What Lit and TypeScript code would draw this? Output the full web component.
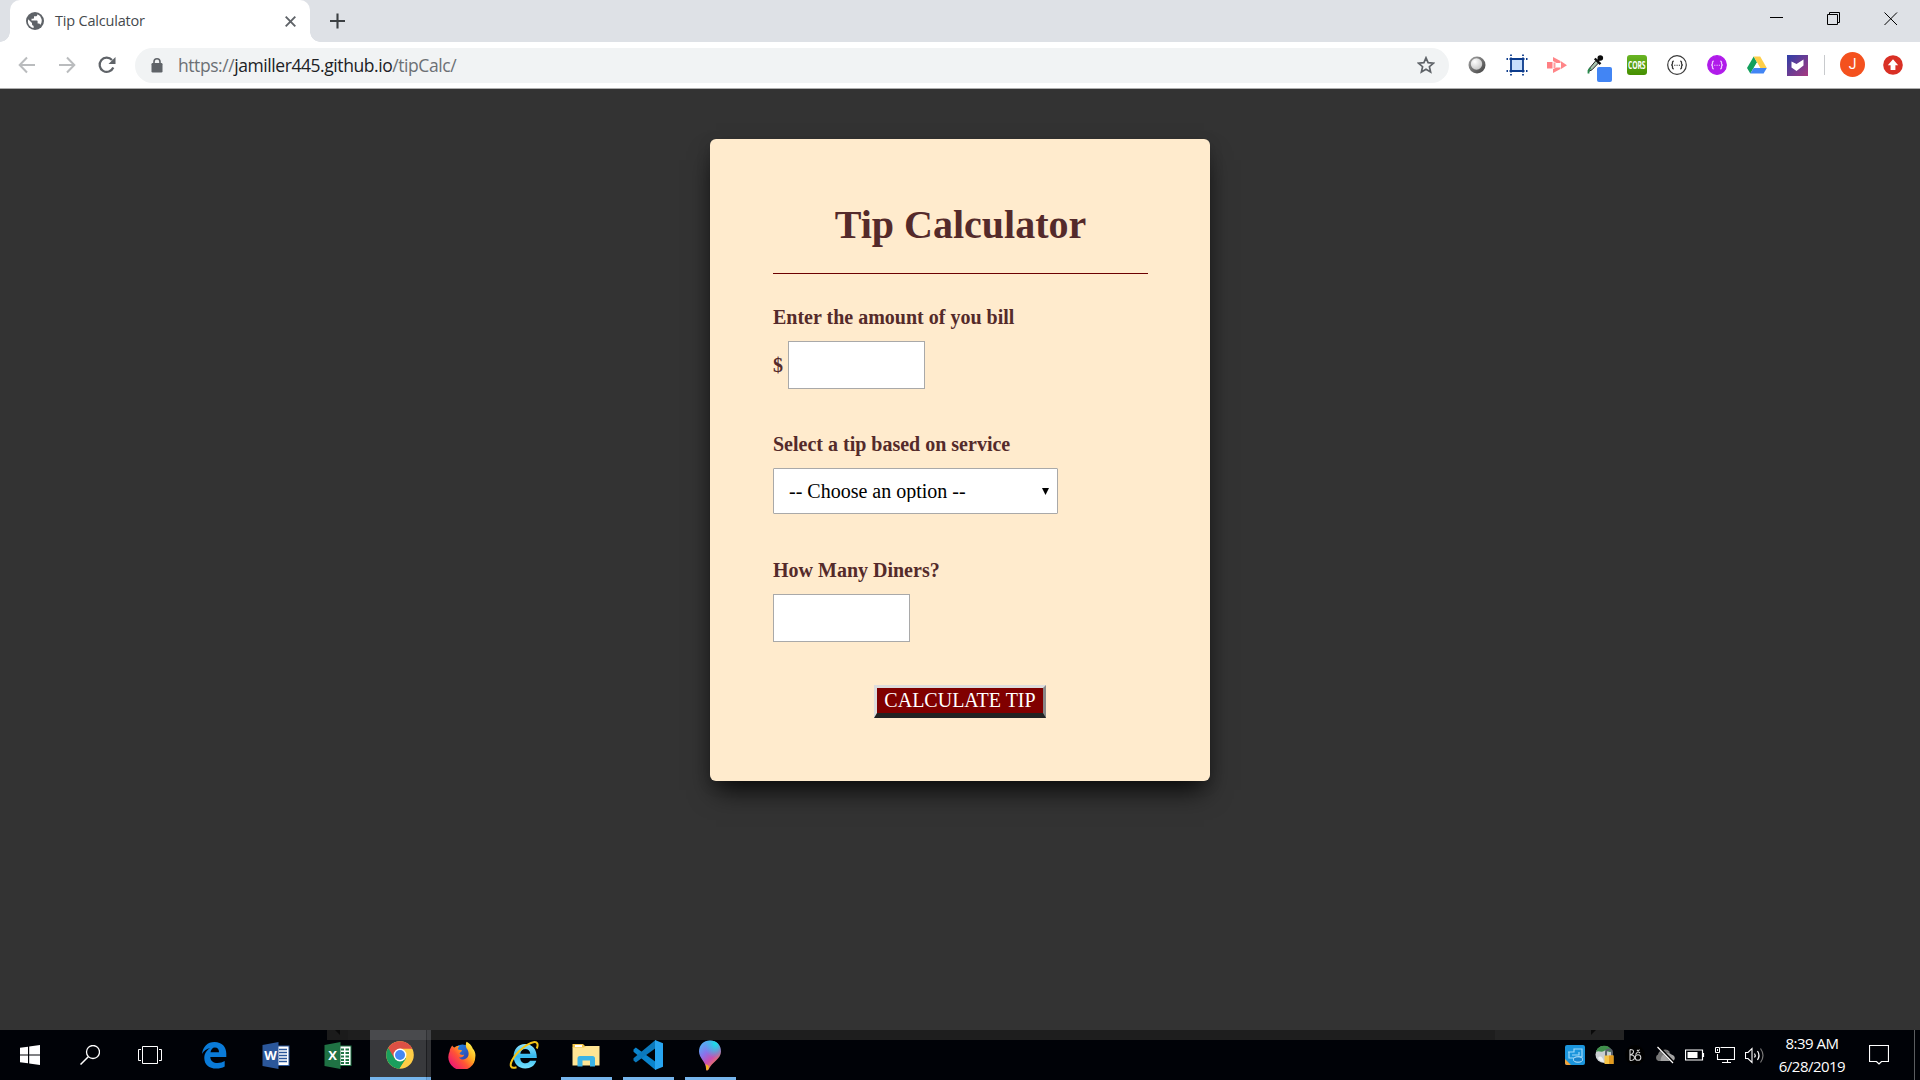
import { LitElement, html, css, svg } from "lit";
import { customElement } from "lit/decorators.js";

const icon = (w: number, h: number, body: unknown) =>
  html`<svg width=${w} height=${h} viewBox="0 0 ${w} ${h}" fill="none">${body}</svg>`;

const globe = icon(18, 18, svg`
  <circle cx="9" cy="9" r="9" fill="#5f6368"/>
  <path d="M2.2 7.2 L6 11 V12.2 C6 13 6.8 13.8 7.6 13.8 V16 C4.4 15.400 1.900 12.600 1.900 9.200 Z" fill="#fff"/>
  <path d="M11.500 2.200 C11.500 3.400 10.700 4.200 9.600 4.300 H8 V6 C8 6.500 7.600 6.800 7.200 6.800 H5.500 V8.600 H10.600 C11.200 8.600 11.600 9 11.600 9.600 V11.600 H12.500 C13.300 11.600 13.900 12.100 14.200 12.900 A6.900 6.900 0 0 0 11.500 2.200Z" fill="#fff"/>`);

const back = icon(18, 18, svg`<path d="M17 9H2M9 1.500L1.700 9L9 16.500" stroke="#babcbe" stroke-width="2"/>`);
const forward = icon(18, 18, svg`<path d="M1 9H16M9 1.500L16.300 9L9 16.500" stroke="#babcbe" stroke-width="2"/>`);
const reload = icon(18, 18, svg`
  <path d="M15.300 11.500A7.100 7.100 0 1 1 14 4" stroke="#5f6368" stroke-width="2.200"/>
  <path d="M17.500 1V8H10.500Z" fill="#5f6368"/>`);
const lock = icon(12, 15, svg`
  <rect x="0.500" y="5" width="11" height="9.500" rx="1.200" fill="#5f6368"/>
  <path d="M3 6V3.800a3 3 0 0 1 6 0V6" stroke="#5f6368" stroke-width="1.600"/>`);
const star = icon(18, 18, svg`
  <path d="M9 1.800L11.100 6.700L16.400 7.200L12.400 10.700L13.600 15.900L9 13.200L4.400 15.900L5.600 10.700L1.600 7.200L6.900 6.700Z" stroke="#5f6368" stroke-width="1.700"/>`);

const ball = icon(18, 18, svg`
  <defs><linearGradient id="bl" x1="0" y1="0" x2="1" y2="1"><stop stop-color="#a5a5a5"/><stop offset="1" stop-color="#3f3f3f"/></linearGradient>
  <radialGradient id="bi" cx=".35" cy=".3" r=".8"><stop stop-color="#fff"/><stop offset="1" stop-color="#c4c4c4"/></radialGradient></defs>
  <circle cx="9" cy="9" r="8.500" fill="url(#bl)"/><circle cx="8.500" cy="8" r="5.700" fill="url(#bi)"/>`);
const frame = icon(22, 22, svg`
  <rect x="5" y="5" width="12" height="12" fill="#c8dffc"/>
  <path d="M3.500 5H18.500M3.500 17H18.500M5 3.500V18.500M17 3.500V18.500" stroke="#0c3b8c" stroke-width="1.800"/>
  <path d="M0.500 5H2M20 5H21.500M0.500 17H2M20 17H21.500M5 0.500V2M17 0.500V2M5 20V21.500M17 20V21.500" stroke="#0c3b8c" stroke-width="1.800"/>`);
const play = icon(20, 18, svg`
  <rect x="0" y="6" width="5.500" height="6.500" fill="#ff7f83"/>
  <path d="M6 1L13.500 5V7H9.500L6 5Z" fill="#ff8588"/>
  <path d="M6 17L13.500 13V11.500H9.500L6 13Z" fill="#ff8588"/>
  <path d="M6.500 6.500H8.500V12H6.500Z" fill="#ff9c9e"/>
  <path d="M14 5.200L20 9.200L14 13Z" fill="#ff8588"/>`);
const dropper = icon(26, 28, svg`
  <path d="M2.500 17.500L3.300 14.500L10 6.500L12.500 9L6 15.800Z" fill="#a9c4af" stroke="#222" stroke-width="1"/>
  <path d="M2.500 19.500V16.500L4.500 14" stroke="#278b4c" stroke-width="1.800"/>
  <path d="M8.800 4.500L14.500 10.200M11 7.500L14.500 4" stroke="#111" stroke-width="2.400"/>
  <circle cx="14.300" cy="4" r="2.800" fill="#0b0b0b"/>
  <rect x="11" y="13" width="15" height="15" rx="2" fill="#4285f4"/>`);
const cors = html`<span class="cors"><span>CORS</span></span>`;
const braces = (ring: string, fill: string, ink: string) => icon(20, 20, svg`
  <circle cx="10" cy="10" r="9.300" fill=${fill} stroke=${ring} stroke-width="1.200"/>
  <path d="M6.800 6.200C5.300 6.200 5.500 7.200 5.500 8.200C5.500 9.300 5.200 10 4.200 10C5.200 10 5.500 10.700 5.500 11.800C5.500 12.800 5.300 13.800 6.800 13.800M13.200 6.200C14.700 6.200 14.500 7.200 14.500 8.200C14.500 9.300 14.800 10 15.800 10C14.800 10 14.500 10.700 14.500 11.800C14.500 12.800 14.700 13.800 13.200 13.800" stroke=${ink} stroke-width="1.300"/>
  <path d="M7.200 10.300H13" stroke=${ink} stroke-width="1.100" stroke-dasharray="1.200 1.100"/>`);
const drive = icon(20, 18, svg`
  <path d="M6.700 0.500L0 12L3.300 17.500L10 6.200Z" fill="#12a05c"/>
  <path d="M6.700 0.500H13.200L19.800 12H13.300Z" fill="#ffcf48"/>
  <path d="M6.700 12H19.800L16.600 17.500H3.300Z" fill="#4285f4"/>
  <path d="M10 6.800L13 12H6.900Z" fill="#fff"/>`);
const check = icon(21, 21, svg`
  <defs><linearGradient id="ck" x1="0" y1="0" x2="1" y2="1"><stop stop-color="#2d3fa8"/><stop offset="1" stop-color="#a8397f"/></linearGradient></defs>
  <rect width="21" height="21" fill="url(#ck)"/>
  <path d="M4.500 6.500L9.500 9L16.500 4.500V10.500L9.500 16L4.500 12.500Z" fill="#fff"/>`);
const update = icon(20, 20, svg`
  <circle cx="10" cy="10" r="9.800" fill="#d93025"/>
  <path d="M10 4.300L15.200 10.200H12.400V15H7.600V10.200H4.800Z" fill="#fff"/>`);

const windows = icon(20, 20, svg`<path d="M0 2.800L8 1.700V9.400H0ZM9.200 1.500L20 0V9.400H9.200ZM0 10.500H8V18.300L0 17.200ZM9.200 10.500H20V20L9.200 18.500Z" fill="#fff"/>`);
const search = icon(20, 20, svg`<circle cx="13" cy="7" r="6.500" stroke="#fff" stroke-width="1.300"/><path d="M8.300 11.700L0.500 19.500" stroke="#fff" stroke-width="1.500"/>`);
const taskview = icon(24, 18, svg`<path d="M4.500 0.500H19.500V17.500H4.500ZM3 3.500H0.500V14.500H3M21 3.500H23.500V14.500H21" stroke="#fff"/>`);
const edge = icon(26, 28, svg`
  <path d="M1 13C2 5.500 6.500 1 13.500 1C21 1 25.300 6 25.300 12.500V16H9.300C9.500 20 12.500 22 16.500 22C19.300 22 21.600 21.200 23.700 20V25.600C21.300 27 18.600 27.600 15.300 27.600C8 27.600 3.300 23.500 3.300 17C3.300 12.600 5.700 9 9.400 7C5.800 7.500 2.800 9.800 1 13ZM9.500 11.300H18C18 8.500 16.700 6.500 13.900 6.500C11.500 6.500 9.900 8.600 9.500 11.300Z" fill="#0a7bd8" fill-rule="evenodd"/>`);
const office = (main: string, excel: boolean) => html`<span class="office">${icon(28, 27, svg`
  <rect x="14" y="4" width="13" height="19.500" fill="#fff" stroke=${main} stroke-width="1"/>
  ${excel
    ? svg`<path d="M17 7.500H20M21.500 7.500H25M17 11H20M21.500 11H25M17 14.500H20M21.500 14.500H25M17 18H20M21.500 18H25M17 21H20M21.500 21H25" stroke=${main} stroke-width="1.800"/>`
    : svg`<path d="M17 7.500H25M17 10.500H25M17 13.500H25M17 16.500H25M17 19.500H25" stroke=${main} stroke-width="1.300"/>`}
  <path d="M0.500 3L16.500 0V27L0.500 24Z" fill=${main}/>`)}<b>${excel ? "X" : "W"}</b></span>`;
const chrome = icon(28, 28, svg`
  <circle cx="14" cy="14" r="13.800" fill="#ffcd46"/>
  <path d="M14 14L2.050 7.100A13.800 13.800 0 0 0 13 27.800L20 17.500Z" fill="#1a9f5d"/>
  <path d="M14 14V7.700H26.300A13.800 13.800 0 0 0 2.300 6.900L8.400 17.200Z" fill="#dd5044"/>
  <path d="M8.500 17.200L14 20.300L19.500 17.100L13.300 27.800L12 27Z" fill="#1a9f5d"/>
  <circle cx="14" cy="14" r="6.400" fill="#fff"/><circle cx="14" cy="14" r="5" fill="#4587f3"/>`);
const firefox = icon(28, 28, svg`
  <defs><linearGradient id="ff" x1=".9" y1=".1" x2=".15" y2=".8"><stop stop-color="#fff44f"/><stop offset=".35" stop-color="#ffb01f"/><stop offset=".65" stop-color="#ff5634"/><stop offset="1" stop-color="#f0206b"/></linearGradient>
  <linearGradient id="fb" x1="0" y1="0" x2="1" y2="1"><stop stop-color="#1596f5"/><stop offset="1" stop-color="#3b1f8f"/></linearGradient></defs>
  <circle cx="14.500" cy="14" r="10.500" fill="url(#fb)"/>
  <path d="M4.200 4.500C4.800 5.600 5.600 6.400 6.500 6.500C8 5 10 4.700 11.500 5C10.400 6 9.900 7 10.100 8.500L14 9.200C14 11 11.800 11.200 11.600 12.600C12.500 14.300 14.700 14 16.200 13.800C15.400 16.300 13 16.800 11 16.400C12.500 19 17.500 19.400 19.700 16C21.700 12.600 20 9 18.500 7.300C17.700 5.500 17.500 3 18.500 0.800C22.500 2.700 24.300 6 24.700 7.500C27 10 27.800 13 27.300 16A13.500 13 0 1 1 1.600 10.500C1.700 8.200 2.800 6.500 4.200 4.500Z" fill="url(#ff)"/>`);
const ie = icon(30, 29, svg`
  <defs><linearGradient id="ie" x1="0" y1="0" x2="0" y2="1"><stop stop-color="#8ee4ff"/><stop offset=".5" stop-color="#35b8ee"/><stop offset="1" stop-color="#77e3ff"/></linearGradient></defs>
  <path d="M16 3C23.500 3 28 8.300 27.800 17H11.300C11.300 20.300 13.500 22.300 16.600 22.300C18.800 22.300 20.200 21.400 21 19.800H27.300C25.800 24.800 21.500 27.500 16.300 27.500C9.300 27.500 4.600 22.300 4.600 15.300C4.600 8.300 9.400 3 16 3ZM11.300 12.700H21.300C21 9.800 19 8 16.300 8C13.700 8 11.700 9.800 11.300 12.700Z" fill="url(#ie)" fill-rule="evenodd"/>
  <path d="M27.800 7.500C29.500 3.300 28.500 0.500 24.500 1.200C18 2.300 7 11.500 3 19.500C0.500 24.500 1.500 28.300 7.500 26.200" stroke="#f5c518" stroke-width="2"/>`);
const explorer = icon(28, 24, svg`
  <path d="M0.500 1H11L13.500 3.500V5H0.500Z" fill="#f3c64b"/><rect x="3" y="2" width="7" height="2" fill="#fff"/>
  <path d="M0.500 4.500H12L13.500 3H27.500V22.500H0.500Z" fill="#ffe594"/>
  <path d="M5.500 23.500V15.500Q5.500 13 8 13H20.500Q23 13 23 15.500V23.500H18V17.500H10.500V23.500Z" fill="#3bb4e7"/>`);
const vscode = icon(30, 30, svg`
  <path d="M0.500 9.500L2.800 7.400L22.500 21.800V30L0.500 11.800Z" fill="#0a84cd"/>
  <path d="M0.500 20.500L2.800 22.600L22.500 8.200V0L0.500 18.200Z" fill="#0b79bd"/>
  <path d="M22 0L30 3.200V26.800L22 30Z" fill="#27a4f0"/>`);
const paint = icon(24, 31, svg`
  <defs><linearGradient id="pa" x1=".1" y1=".1" x2=".7" y2="1"><stop stop-color="#52b0f5"/><stop offset=".35" stop-color="#8a72ea"/><stop offset=".62" stop-color="#ca4fb1"/><stop offset="1" stop-color="#fc9a2c"/></linearGradient>
  <radialGradient id="pb" cx=".75" cy=".1" r=".5"><stop stop-color="#16e1e7"/><stop offset="1" stop-color="#16e1e7" stop-opacity="0"/></radialGradient></defs>
  <path d="M12 0.500C18.500 0.500 23 5 23 11.500C23 19 14 22 10.500 29.500C9.500 31.500 8 30.500 8 28.500C8 22 1 18 1 11.500C1 5 5.500 0.500 12 0.500Z" fill="url(#pa)"/>
  <path d="M12 0.500C18.500 0.500 23 5 23 11.500C23 19 14 22 10.500 29.500C9.500 31.500 8 30.500 8 28.500C8 22 1 18 1 11.500C1 5 5.500 0.500 12 0.500Z" fill="url(#pb)"/>
  <path d="M7.700 24L10.700 26V29L8.500 30.500Z" fill="#f6b51d"/>`);

const intel = icon(20, 20, svg`
  <rect width="20" height="20" rx="2" fill="#1b95dc"/><path d="M0 14L6 20H2Q0 20 0 18Z" fill="#f2a33a"/>
  <path d="M3 7H9V4H17V12H13M4 7V13H11M7 10H14V7" stroke="#9bd9fb" stroke-width="1.200"/>
  <ellipse cx="13" cy="14.500" rx="4.500" ry="2.700" fill="#1783cc" stroke="#bfe6fb"/>`);
const vpn = icon(20, 20, svg`
  <circle cx="9" cy="9.500" r="8.500" fill="#c9ced2"/><path d="M1 7A8.500 8.500 0 0 1 17 6C14 9 12 4 9 6C6 8 4 5 1 7Z" fill="#3f8f4c"/>
  <path d="M3 13C5 10 8 12 9 17C6 17 4 15.500 3 13Z" fill="#eef1f3"/>
  <path d="M11 11V7.500a3 3 0 0 1 6 0V11" stroke="#59616b" stroke-width="2"/><rect x="9.500" y="10.500" width="9" height="8.500" fill="#f6c447"/><path d="M14 10.500H18.500V19H14Z" fill="#e39a1f"/>`);
const bo = icon(20, 20, svg`
  <circle cx="10" cy="10" r="10" fill="#000"/>
  <path d="M5 4.500V15.500M5 4.500Q9 4.500 8.500 7Q8 9.500 5 9.700Q9.500 10 9.500 12.700Q9.300 15.500 5 15.500M10.500 9.500L14.500 4.500M12 5L15 8" stroke="#d4d4d4" stroke-width="1.100"/>
  <circle cx="13" cy="12.500" r="2.800" stroke="#d4d4d4" stroke-width="1.100"/>`);
const cloud = icon(20, 20, svg`
  <path d="M3.500 16A3.500 3.500 0 0 1 3 9.500A5 5 0 0 1 7 5.500A6 6 0 0 1 14.500 6.500L15 16Z" fill="#777"/><path d="M5.500 16Q5.500 10.500 10 8.500Q14.500 7 16.500 9.500Q20 10.500 19.800 13.500Q19.500 16 17 16Z" fill="#a3a3a3"/>
  <path d="M3 1.500L18.500 17.500" stroke="#000" stroke-width="2.600"/><path d="M2.500 2L18 18" stroke="#fff" stroke-width="1.200"/>`);
const battery = icon(20, 12, svg`<path d="M0.500 1H17.500V11H0.500ZM18.500 4V8" stroke="#fff" stroke-width="1.200"/><rect x="2.500" y="3" width="10" height="6" fill="#fff"/>`);
const network = icon(20, 17, svg`
  <path d="M5.500 0.500H19.500V12.500H2.500V7M12.500 12.500V15.500M7 15.500H16" stroke="#fff" stroke-width="1.100"/><path d="M0.500 0.500H4.500V5.500H0.500ZM2.500 2V4" stroke="#fff"/>`);
const speaker = icon(20, 17, svg`
  <path d="M0.500 5.500H3L7 1.500V15.500L3 11.500H0.500Z" stroke="#fff" stroke-width="1.100"/><path d="M9.500 6.500Q11 8.500 9.500 10.500M12.500 4Q15.500 8.500 12.500 13" stroke="#fff" stroke-width="1.200"/><path d="M15.500 1.500Q20.500 8.500 15.500 15.500" stroke="#777" stroke-width="1.200"/>`);
const notice = icon(20, 20, svg`<path d="M0.500 0.500H19.500V16.500H12.500L10 19L7.500 16.500H0.500Z" stroke="#fff" stroke-width="1.200"/>`);

@customElement("browser-chrome")
class BrowserChrome extends LitElement {
  static styles = css`
    :host { display: block; font-family: "Open Sans", "Noto Sans", sans-serif; }
    svg { display: block; flex: none; }
    .strip { height: 42px; background: #dee1e6; display: flex; }
    .tab { position: relative; box-sizing: border-box; width: 300px; margin-left: 10px; padding: 0 14px 0 16px; background: #fff; border-radius: 10px 10px 0 0; display: flex; align-items: center; }
    .tab::before, .tab::after { content: ""; position: absolute; bottom: 0; width: 10px; height: 10px; }
    .tab::before { left: -10px; background: radial-gradient(circle at 0 0, transparent 9.500px, #fff 10px); }
    .tab::after { right: -10px; background: radial-gradient(circle at 100% 0, transparent 9.500px, #fff 10px); }
    .title { flex: 1; margin-left: 11px; font-size: 14.500px; letter-spacing: -0.200px; line-height: 20px; color: #45494d; white-space: nowrap; }
    .new { margin: 13px 0 0 20px; }
    .controls { margin-left: auto; display: flex; gap: 43px; padding: 12px 22px 0 0; }
    .bar { height: 46px; background: #fff; display: flex; align-items: center; box-sizing: border-box; padding-left: 18px; }
    .nav { display: flex; gap: 22px; }
    .omni { flex: none; width: 1314px; height: 35px; margin-left: 19px; border-radius: 18px; background: #f1f3f4; display: flex; align-items: center; box-sizing: border-box; padding: 0 14px 0 16px; }
    .url { flex: 1; margin-left: 15px; font-size: 17.500px; letter-spacing: -0.430px; line-height: 24px; color: #6c7075; white-space: nowrap; }
    .url b { font-weight: 400; color: #202124; }
    .exts { display: flex; margin-left: 8px; }
    .ext { width: 40px; height: 30px; display: flex; align-items: center; justify-content: center; }
    .cors { width: 20px; height: 20px; border-radius: 3px; background: linear-gradient(#69b524, #458f00); display: flex; align-items: center; justify-content: center; }
    .cors span { font: 700 10px/20px "Open Sans", sans-serif; letter-spacing: -0.300px; color: #fff; transform: scale(.68, 1.1); }
    .drop { padding: 6px 0 0 4px; box-sizing: border-box; }
    .sep { width: 1px; height: 20px; background: #c8cacd; margin: 5px 15px 0 7px; }
    .avatar { width: 25px; height: 25px; border-radius: 50%; background: #f4511e; color: #fff; font: 14px/25px Roboto, sans-serif; text-align: center; margin: 2px 18px 0 0; }
    .exts > svg { margin-top: 5px; }
    .edge { height: 1px; background: #adadad; }
  `;
  render() {
    const exts = [ball, frame, play];
    const more = [cors, braces("#3a3a3a", "#fff", "#333"), braces("#b01bea", "#b01bea", "#eec8ff"), drive, check];
    return html`
      <div class="strip">
        <div class="tab">${globe}<span class="title">Tip Calculator</span>
          ${icon(11, 11, svg`<path d="M0.700 0.700L10.300 10.300M10.300 0.700L0.700 10.300" stroke="#5f6368" stroke-width="1.900"/>`)}
        </div>
        <div class="new">${icon(15, 16, svg`<path d="M7.500 0.500V15.500M0 8H15" stroke="#3c4043" stroke-width="2.100"/>`)}</div>
        <div class="controls">
          ${icon(14, 14, svg`<path d="M0 5.500H13" stroke="#000"/>`)}
          ${icon(14, 14, svg`<path d="M0.500 2.500H10.500V12.500H0.500ZM2.500 2V0.500H12.500V10.500H11" stroke="#000"/>`)}
          ${icon(14, 14, svg`<path d="M0.500 0.500L13 13M13 0.500L0.500 13" stroke="#000"/>`)}
        </div>
      </div>
      <div class="bar">
        <div class="nav">${back}${forward}${reload}</div>
        <div class="omni">${lock}<span class="url">https://<b>jamiller445.github.io</b>/tipCalc/</span>${star}</div>
        <div class="exts">
          ${exts.map((e) => html`<div class="ext">${e}</div>`)}
          <div class="ext drop">${dropper}</div>
          ${more.map((e) => html`<div class="ext">${e}</div>`)}
          <div class="sep"></div><div class="avatar">J</div>${update}
        </div>
      </div>
      <div class="edge"></div>`;
  }
}

@customElement("tip-form")
class TipForm extends LitElement {
  static styles = css`
    :host { display: block; font-family: "Liberation Serif", "Times New Roman", serif; color: #542a2a; }
    .card { box-sizing: border-box; width: 500px; height: 642px; padding: 63px 62px 0 63px; background: #ffebcd; border-radius: 6px; box-shadow: 0 15px 25px -6px rgba(0, 0, 0, .8), 0 4px 14px rgba(0, 0, 0, .15); display: flex; flex-direction: column; align-items: flex-start; }
    h1 { margin: 0; width: 100%; height: 72px; box-sizing: border-box; padding-top: 1px; font-size: 40px; line-height: 44px; text-align: center; border-bottom: 1px solid #6c0000; }
    label { font-size: 20px; line-height: 22px; font-weight: 700; margin: 44px 0 13px; }
    h1 + label { margin-top: 32px; }
    .select + label { margin-top: 45px; }
    .row { display: flex; align-items: center; gap: 5px; font-size: 20px; font-weight: 700; }
    input { box-sizing: border-box; width: 137px; height: 48px; border: 1px solid #a9a9a9; background: #fff; padding: 0 15px; margin: 0; font: 20px "Liberation Serif", serif; border-radius: 0; outline: 0; }
    .select { display: grid; width: 285px; height: 46px; }
    .select > * { grid-area: 1 / 1; }
    select { appearance: none; box-sizing: border-box; border: 1px solid #a9a9a9; border-radius: 1px; background: #fff; color: #000; padding: 0 15px; margin: 0; font: 20px "Liberation Serif", serif; outline: 0; }
    .select svg { justify-self: end; align-self: center; margin-right: 9px; pointer-events: none; }
    button { align-self: center; margin: 43px 1px 0 0; box-sizing: border-box; width: 172px; height: 33px; padding: 0; border-style: solid; border-width: 3px 3px 5px; border-color: #ddd #888 #222 #ddd; background: maroon; color: #fff; font: 20px/25px "Liberation Serif", serif; text-transform: uppercase; white-space: nowrap; }
  `;
  render() {
    return html`<form class="card">
      <h1>Tip Calculator</h1>
      <label for="bill">Enter the amount of you bill</label>
      <div class="row"><span>$</span><input id="bill" type="text" /></div>
      <label for="service">Select a tip based on service</label>
      <div class="select">
        <select id="service"><option>-- Choose an option --</option></select>
        ${icon(7, 7, svg`<path d="M0 0H7L3.500 7Z" fill="#000"/>`)}
      </div>
      <label for="diners">How Many Diners?</label>
      <input id="diners" type="text" />
      <button type="button">Calculate Tip</button>
    </form>`;
  }
}

@customElement("task-bar")
class TaskBar extends LitElement {
  static styles = css`
    :host { display: block; font-family: "Open Sans", "Noto Sans", sans-serif; }
    svg { display: block; flex: none; }
    .bar { position: relative; height: 50px; background: #000207; display: flex; }
    .ghost { position: absolute; top: 0; left: 327px; width: 1297px; height: 10px; background: linear-gradient(90deg, #1b1b1b 21px, #1e1e1e 21px, #1e1e1e 1168px, #242424 1168px); }
    .ghost i { position: absolute; top: 0; width: 5px; height: 5px; background: #0a0a0a; }
    .ghost .a { left: 8px; clip-path: polygon(0 0, 100% 0, 100% 100%); }
    .ghost .b { left: 1264px; clip-path: polygon(0 0, 100% 0, 0 100%); }
    .sys { width: 60px; display: flex; align-items: center; justify-content: center; }
    .apps { display: flex; margin-left: 3px; }
    .app { position: relative; width: 62px; box-sizing: border-box; display: flex; align-items: center; justify-content: center; }
    .open::after { content: ""; position: absolute; left: 6px; right: 5px; bottom: 0; height: 3px; background: #76b5ec; }
    .active::before { content: ""; position: absolute; inset: 0 0 0 1px; background: linear-gradient(90deg, #38393c 56px, #1c1d20 56px, #1c1d20 57px, #303134 57px); }
    .active::after { left: 1px; right: 0; background: linear-gradient(90deg, #76b5ec 56px, #5a92c4 56px, #5a92c4 57px, #6ba6dc 57px); }
    .shine { position: absolute; inset: 0 0 auto 1px; height: 10px; background: rgba(255, 255, 255, .09); }
    .app > svg, .app > span:not(.shine) { position: relative; }
    .office { position: relative; display: block; }
    .office b { position: absolute; left: 0; width: 17px; top: 0; text-align: center; color: #fff; font: 700 13px/27px "Open Sans", sans-serif; }
    .tray { margin-left: auto; display: flex; align-items: center; }
    .cell { width: 30px; display: flex; justify-content: center; }
    .clock { width: 84px; text-align: center; color: #fff; font-size: 15px; letter-spacing: -0.520px; line-height: 23px; padding-bottom: 1px; }
    .note { width: 50px; display: flex; justify-content: center; }
    .desk { width: 5px; height: 50px; margin-left: 10px; border-left: 1px solid #5b5d60; }
  `;
  render() {
    const apps: [unknown, string][] = [
      [edge, ""], [office("#2b579a", false), ""], [office("#1f7244", true), ""], [chrome, "open active"],
      [firefox, ""], [ie, ""], [explorer, "open"], [vscode, "open"], [paint, "open"],
    ];
    return html`<div class="bar">
      <div class="ghost"><i class="a"></i><i class="b"></i></div>
      ${[windows, search, taskview].map((s) => html`<div class="sys">${s}</div>`)}
      <div class="apps">${apps.map(([a, c]) => html`<div class="app ${c}">${c.includes("active") ? html`<span class="shine"></span>` : ""}${a}</div>`)}</div>
      <div class="tray">
        ${[intel, vpn, bo, cloud, battery, network, speaker].map((t) => html`<div class="cell">${t}</div>`)}
        <div class="clock">8:39 AM<br />6/28/2019</div>
        <div class="note">${notice}</div>
        <div class="desk"></div>
      </div>
    </div>`;
  }
}

@customElement("app-root")
class AppRoot extends LitElement {
  static styles = css`
    :host { display: flex; flex-direction: column; width: 1920px; height: 1080px; overflow: hidden; background: #333; }
    main { flex: 1; display: flex; justify-content: center; align-items: flex-start; padding-top: 50px; }
  `;
  render() {
    return html`<browser-chrome></browser-chrome><main><tip-form></tip-form></main><task-bar></task-bar>`;
  }
}
